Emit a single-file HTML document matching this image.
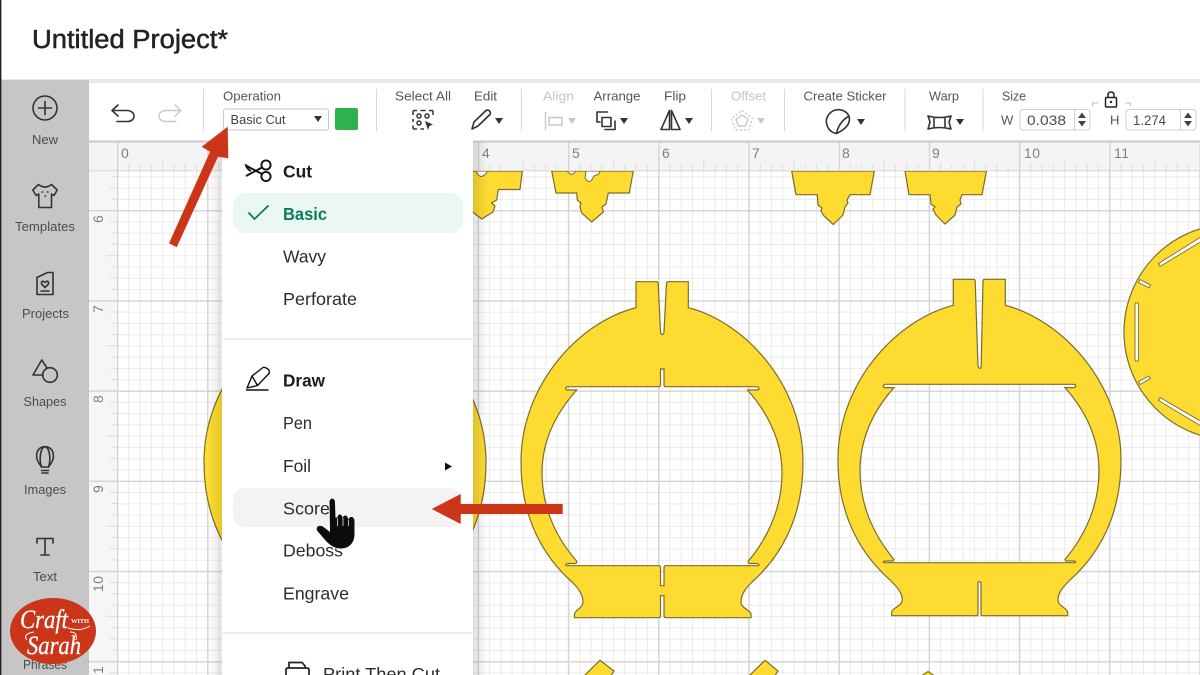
<!DOCTYPE html>
<html><head><meta charset="utf-8"><title>Untitled Project</title>
<style>
html,body{margin:0;padding:0;background:#fff;width:1200px;height:675px;overflow:hidden}
svg{display:block}
text{font-family:"Liberation Sans",sans-serif}
.lb{font-size:13px;fill:#555}
.side{font-size:13px;fill:#4a4d50}
.m{font-size:17.5px;fill:#2a2c2e}
.r{font-size:14px;fill:#808080}
.ic{fill:none;stroke:#333;stroke-width:1.6;stroke-linecap:round;stroke-linejoin:round}
.dis{fill:none;stroke:#c8c8c8;stroke-width:1.4}
.shape{fill:#fedb31;stroke:#7d6c2c;stroke-width:1.2;fill-rule:evenodd}
</style></head><body>
<svg width="1200" height="675" viewBox="0 0 1200 675" xmlns="http://www.w3.org/2000/svg">
<defs>
<pattern id="gmin" patternUnits="userSpaceOnUse" x="117" y="210.2" width="11.275" height="11.275"><path d="M.5 0V11.275M0 .5H11.275" stroke="#ebebeb" stroke-width="1" fill="none"/></pattern>
<pattern id="gmaj" patternUnits="userSpaceOnUse" x="116.8" y="210" width="90.2" height="90.2"><path d="M.8 0V90.2M0 .8H90.2" stroke="#d4d4d4" stroke-width="1.4" fill="none"/></pattern>
<pattern id="tickT" patternUnits="userSpaceOnUse" x="117" y="142" width="90.2" height="29"><path d="M11.8 21V29M22.9 23V29M34.2 23V29M45.6 17V29M56.8 23V29M68 21V29M79.3 23V29" stroke="#dcdcdc" stroke-width="1" fill="none"/><path d="M.7 0V29" stroke="#d2d2d2" stroke-width="1.3"/></pattern>
<pattern id="tickL" patternUnits="userSpaceOnUse" x="89" y="210" width="29" height="90.2"><path d="M21 11.8H29M23 22.9H29M23 34.2H29M17 45.6H29M23 56.8H29M21 68H29M23 79.3H29" stroke="#dcdcdc" stroke-width="1" fill="none"/><path d="M0 .7H29" stroke="#d2d2d2" stroke-width="1.3"/></pattern>
<linearGradient id="sr" x1="0" x2="1" y1="0" y2="0"><stop offset="0" stop-color="#000" stop-opacity=".12"/><stop offset="1" stop-color="#000" stop-opacity="0"/></linearGradient>
<linearGradient id="sl" x1="1" x2="0" y1="0" y2="0"><stop offset="0" stop-color="#000" stop-opacity=".1"/><stop offset="1" stop-color="#000" stop-opacity="0"/></linearGradient>
<clipPath id="canvas"><rect x="118" y="171" width="1082" height="504"/></clipPath>
<path id="pcA" d="M636,281.7H656.5Q658,281.7 658.2,283.5L660.5,332Q661,334.5 662.3,334.5Q663.6,334.5 664,332L666.5,283.5Q666.7,281.7 668.2,281.7H688.3V307.7C745,322 803,385 803,462C803,520 779,558 752,582C746,588 741,594 741,602C741,608 750,610 751,614V617.7H666Q664,617.7 664,615.5V595.7H660.5V615.5Q660.5,617.7 658.5,617.7H574.5V614C575,610 583,608 583,602C583,594 578,588 572,582C545,558 521,520 521,462C521,385 579,322 636,307.7Z M660.5,369H664V384.7Q664,386.7 666,386.7H756.5Q759,387 759,388.5Q759,390 757,390H747.5C767,412 782,440 782,473C782,510 766,540 748,561.5L749,563.5H757Q759,564 759,565Q759,565.7 757,565.7H666Q664,565.7 664,567.7V585.7H660.5V567.7Q660.5,565.7 658.5,565.7H567.5Q565.7,565.7 565.7,565Q565.7,564 567.5,563.5H576L577,561.5C558,540 542,510 542,473C542,440 557,412 576.7,390H567.5Q565.7,390 565.7,388.5Q565.7,387 567.5,386.7H658.5Q660.5,386.7 660.5,384.7Z"/>
</defs>

<!-- page -->
<rect width="1200" height="675" fill="#fff"/>
<rect x="0" y="79" width="1200" height="4" fill="#e9e9e9"/>
<text x="32" y="48" font-size="25.5" fill="#1f2327" stroke="#1f2327" stroke-width=".5" textLength="196" lengthAdjust="spacingAndGlyphs">Untitled Project*</text>

<!-- canvas -->
<rect x="89" y="141" width="1111" height="534" fill="#fff"/>
<rect x="118" y="171" width="1082" height="504" fill="url(#gmin)"/>
<rect x="118" y="171" width="1082" height="504" fill="url(#gmaj)"/>
<rect x="89" y="142" width="1111" height="29" fill="#f4f4f4"/>
<rect x="89" y="171" width="29" height="504" fill="#f6f6f6"/>
<rect x="118" y="142" width="1082" height="29" fill="url(#tickT)"/>
<rect x="89" y="171" width="29" height="504" fill="url(#tickL)"/>
<rect x="89" y="170.3" width="1111" height="1" fill="#d6d6d6"/>
<rect x="117" y="142" width="1" height="533" fill="#d2d2d2"/>
<rect x="89" y="140.5" width="1111" height="2" fill="#c9c9c9"/>
<g class="r">
<text x="121" y="158">0</text><text x="482" y="158">4</text><text x="572" y="158">5</text><text x="662" y="158">6</text><text x="752" y="158">7</text><text x="842" y="158">8</text><text x="932" y="158">9</text><text x="1024" y="158" textLength="16">10</text><text x="1114" y="158" textLength="15">11</text>
<text transform="translate(103,223) rotate(-90)">6</text><text transform="translate(103,313) rotate(-90)">7</text><text transform="translate(103,403) rotate(-90)">8</text><text transform="translate(103,493) rotate(-90)">9</text><text transform="translate(103,592) rotate(-90)" textLength="16">10</text><text transform="translate(103,674) rotate(-90)">1</text>
</g>

<!-- yellow pieces -->
<g clip-path="url(#canvas)">
<use href="#pcA" class="shape"/>
<use href="#pcA" class="shape" transform="translate(-317,0)"/>
<path class="shape" d="M953.3,279.3H973.5Q975,279.3 975.2,281L978,366Q978.5,368.3 979.7,368.3Q980.9,368.3 981.2,366L983,281Q983.2,279.3 984.7,279.3H1005.3V305.3C1062,320 1121,383 1121,460C1121,518 1097,556 1070,580C1064,586 1058,592 1058,600C1058,606 1067,608 1067.7,612V615.7H982Q981,615.7 981,614V582.5Q981,581.7 979.5,581.7Q978,581.7 978,582.5V614Q978,615.7 976.5,615.7H891.7V612C892,608 902.3,606 902.3,600C902.3,592 896,586 890,580C863,556 838,518 838,460C838,383 896,320 953.3,305.3Z M885,384.3H1074Q1075.7,384.6 1075.7,386Q1075.7,387.4 1074,387.6H1065C1085,410 1099,438 1099,471C1099,508 1083,538 1065,559.5L1066,561H1074Q1075.7,561.4 1075.7,562Q1075.7,562.7 1074,562.7H885Q883.3,562.7 883.3,562Q883.3,561.4 885,561H893L894,559.5C876,538 860,508 860,471C860,438 874,410 894,387.6H885Q883.3,387.4 883.3,386Q883.3,384.6 885,384.3Z"/>
<circle cx="1232" cy="332" r="108" class="shape"/>
<g fill="#fff" stroke="#7d6c2c" stroke-width=".9">
<rect x="1135" y="303" width="3.6" height="58" rx="1"/>
<path d="M1138.5,282.500L1140,279.500L1150.500,285L1149,287.800Z"/>
<path d="M1138.5,381.500L1149,376L1150.500,378.500L1140,384.500Z"/>
<path d="M1160,397.500L1202,422L1200,425.500L1158.500,400.500Z"/>
<path d="M1160,266.500L1202,241L1200,237.500L1158.500,263.500Z"/>
</g>
<path class="shape" d="M460,171H522.3L520,189.5H498.3L496.7,200L491.5,203L495,206L493,212L481.7,219L470,210Z"/>
<path fill="#fff" stroke="#7d6c2c" d="M476,171Q479,178 483,176Q487,174 487,171Z"/>
<path class="shape" d="M551.7,171L556,193H576.7L577.3,200L581,203L580,207L581.7,213L591.7,222L603.3,212L602,207L606,204L608.3,193H629.3L633.3,171Z"/>
<path fill="#fff" stroke="#7d6c2c" d="M567,171Q570,175 573,174Q575,173 575,171Z M586,171L585,178Q588,183 591,181L594,176L599,174L600,171Z"/>
<path class="shape" d="M791.7,171L796,194.7H817.3L818,205L822,208L821,211L824,216L833.3,224.5L843,215L845,207L848,203L847,200L850,194.7H870L874.3,171Z"/>
<path class="shape" d="M905,171L909,194.7H930L931,204L935,207L933,209L936,215L945,224L955,215L957,207L961,204L960,200L962,194.7H982L986.4,171Z"/>
<path class="shape" d="M583,677L600,660.3L614,671L610,677Z"/>
<path class="shape" d="M748,677L765,660.3L778,671L774,677Z"/>
<path class="shape" d="M920,677L928,671.5L936,677Z"/>
</g>

<!-- sidebar -->
<rect x="1" y="80" width="88" height="595" fill="#c6c6c6"/>
<rect x="0" y="0" width="1.4" height="675" fill="#222"/>
<g class="ic">
<circle cx="45" cy="108" r="12"/><path d="M45 101.5V114.5M38.5 108H51.5"/>
<path d="M38.5 184.5L32.8 190L36.2 195.5L38.8 194V207.5H51.5V194L54 195.5L57.2 190L51.5 184.5Q45 189.5 38.5 184.5Z"/>
<path d="M42 192H42.6M47.4 192H48M45 196H45.6" stroke-width="1.5"/>
<path d="M37 277.5L47.5 272.5H53V294.5H37Z"/>
<path d="M45 287.5L41.5 284Q41 281 43.3 281.2L45 282.5L46.7 281.2Q49 281 48.5 284Z"/><path d="M41 291H49"/>
<path d="M41.7 360L33 375H43M41.7 360L47 368"/><circle cx="50" cy="375" r="7.3"/>
<path d="M38.8 463C35 458 35.5 447 45 446.7C54.5 447 55 458 51.2 463L48.5 467H41.5Z"/><path d="M41.5 467C38.5 458 41 447 45 446.7C49 447 51.5 458 48.5 467"/><path d="M41.5 470.5H48.5M42 473H48"/>
<path d="M37 543V538.5H53V543M45 538.5V555M41 555H49"/>
</g>
<g class="side">
<text x="32" y="144" textLength="26">New</text>
<text x="15" y="231" textLength="60" lengthAdjust="spacingAndGlyphs">Templates</text>
<text x="22" y="318" textLength="47" lengthAdjust="spacingAndGlyphs">Projects</text>
<text x="23.5" y="406" textLength="43" lengthAdjust="spacingAndGlyphs">Shapes</text>
<text x="24" y="494" textLength="42" lengthAdjust="spacingAndGlyphs">Images</text>
<text x="33" y="581" textLength="24" lengthAdjust="spacingAndGlyphs">Text</text>
<text x="23" y="669" textLength="44" lengthAdjust="spacingAndGlyphs">Phrases</text>
</g>
<ellipse cx="53" cy="631" rx="43" ry="33" fill="#cb3518"/>
<text x="20" y="628" font-size="26" font-style="italic" fill="#fff" stroke="#fff" stroke-width=".3" style="font-family:'Liberation Serif',serif" textLength="48" lengthAdjust="spacingAndGlyphs">Craft</text>
<text x="71" y="623" font-size="6.5" font-weight="bold" fill="#fff" style="font-family:'Liberation Serif',serif" textLength="18">WITH</text>
<text x="27" y="654" font-size="26" font-style="italic" fill="#fff" stroke="#fff" stroke-width=".3" style="font-family:'Liberation Serif',serif" textLength="54" lengthAdjust="spacingAndGlyphs">Sarah</text>
<path d="M68 628Q80 632 90 626M27 640Q22 634 34 632M70 632Q78 632 76 640" fill="none" stroke="#fff" stroke-width="1"/>

<!-- toolbar -->
<path class="ic" stroke-width="1.7" d="M118 105L112 110.5L118 116M112 110.5H127C131 110.5 134 113 134 116C134 119.5 131 121.5 127 121.5H117"/>
<path class="dis" stroke-linecap="round" stroke-linejoin="round" d="M175 105L181 110.5L175 116M181 110.5H166C162 110.5 159 113 159 116C159 119.5 162 121.5 166 121.5H176"/>
<g fill="#d8d8d8"><rect x="203" y="89" width="1" height="42"/><rect x="376" y="89" width="1" height="42"/><rect x="521" y="89" width="1" height="42"/><rect x="711" y="89" width="1" height="42"/><rect x="784" y="89" width="1" height="42"/><rect x="904.5" y="89" width="1" height="42"/><rect x="982.5" y="89" width="1" height="42"/></g>
<text class="lb" x="223" y="100.5" textLength="58" lengthAdjust="spacingAndGlyphs">Operation</text>
<rect x="223.5" y="109" width="105" height="21" rx="2" fill="#fff" stroke="#c9c9c9"/>
<text x="230.5" y="124" font-size="13" fill="#444" textLength="55" lengthAdjust="spacingAndGlyphs">Basic Cut</text>
<path d="M314 116H322L318 122Z" fill="#333"/>
<rect x="335" y="108" width="23" height="22" rx="2" fill="#2db24c"/>
<text class="lb" x="395" y="100.5" textLength="56" lengthAdjust="spacingAndGlyphs">Select All</text>
<g fill="none" stroke="#333" stroke-width="1.5">
<path d="M413 115V112Q413 110.5 414.5 110.5H417M420.5 110.5H425.5M429 110.5H431.5Q433 110.5 433 112V115M413 119V122M413 125.5V127.5Q413 129 414.5 129H417M420.5 129H424"/>
<circle cx="419" cy="116" r="2"/><circle cx="427" cy="116" r="2"/><circle cx="419" cy="123" r="2"/></g>
<path d="M425 121L433 124.5L429.5 126L428 130Z" fill="#333"/>
<text class="lb" x="474" y="100.5" textLength="23" lengthAdjust="spacingAndGlyphs">Edit</text>
<path class="ic" stroke-width="1.4" d="M472 129L474 122L486 110.5Q488 109.5 489.5 111Q491 112.5 490 114.5L478 126Z"/>
<path d="M495 118H503L499 124Z" fill="#333"/>
<text x="543" y="100.5" font-size="13" fill="#c6c6c6" textLength="31" lengthAdjust="spacingAndGlyphs">Align</text>
<path class="dis" d="M545.5 112V130M549 117.5H562V125H549Z"/>
<path d="M568 118H576L572 124Z" fill="#c8c8c8"/>
<text class="lb" x="593.5" y="100.5" textLength="47" lengthAdjust="spacingAndGlyphs">Arrange</text>
<path class="ic" stroke-width="1.5" d="M597 115V112H607.5M597 115V122H600M602 117.5H611V126.5H602ZM615 121V129.5H605"/>
<path d="M620 118H628L624 124Z" fill="#333"/>
<text class="lb" x="664" y="100.5" textLength="22" lengthAdjust="spacingAndGlyphs">Flip</text>
<path class="ic" stroke-width="1.5" d="M669.5 110.5V129.5H661ZM671.5 110.5V129.5H680Z"/>
<path d="M685 118H693L689 124Z" fill="#333"/>
<text x="731" y="100.5" font-size="13" fill="#c6c6c6" textLength="35" lengthAdjust="spacingAndGlyphs">Offset</text>
<path class="dis" d="M742 115L748 119.5L745.5 126H738.5L736 119.5Z"/>
<path class="dis" stroke-dasharray="2 2" d="M742 110.5L752.5 118.5L748.5 130H735.5L731.500 118.5Z"/>
<path d="M757 118H765L761 124Z" fill="#c8c8c8"/>
<text class="lb" x="803.5" y="100.5" textLength="83" lengthAdjust="spacingAndGlyphs">Create Sticker</text>
<path class="ic" stroke-width="1.6" d="M849 116A12 12 0 1 0 836.5 133.5C838 126 842 120 849 116ZM849 116C851 123 846 129 836.5 133.500"/>
<path d="M857 119H865L861 125Z" fill="#333"/>
<text class="lb" x="929" y="100.5" textLength="30" lengthAdjust="spacingAndGlyphs">Warp</text>
<path class="ic" stroke-width="1.5" d="M928 116Q939 119 951 116L949 122L951 129Q939 126 928 129L930 122Z M934 117.5V127.5M945 117.5V127.5"/>
<path d="M956 119H964L960 125Z" fill="#333"/>
<text class="lb" x="1002" y="100.5" textLength="24" lengthAdjust="spacingAndGlyphs">Size</text>
<text class="lb" x="1001" y="124.500" textLength="12">W</text>
<rect x="1020" y="109.5" width="70" height="20.5" rx="3" fill="#fff" stroke="#cfcfcf"/>
<text x="1027" y="125" font-size="14" fill="#4c4c4c" textLength="39" lengthAdjust="spacingAndGlyphs">0.038</text>
<path d="M1074.5 109.5V130" stroke="#cfcfcf"/>
<path d="M1078 118L1082 112.5L1086 118ZM1078 121L1082 126.5L1086 121Z" fill="#444"/>
<text class="lb" x="1110" y="124.500" textLength="9">H</text>
<rect x="1126" y="109.5" width="70" height="20.5" rx="3" fill="#fff" stroke="#cfcfcf"/>
<text x="1133" y="125" font-size="14" fill="#4c4c4c" textLength="33" lengthAdjust="spacingAndGlyphs">1.274</text>
<path d="M1180.5 109.5V130" stroke="#cfcfcf"/>
<path d="M1184 118L1188 112.5L1192 118ZM1184 121L1188 126.5L1192 121Z" fill="#444"/>
<path d="M1092.5 106V103H1098M1125 103H1130.5V106" fill="none" stroke="#bbb" stroke-width="1"/>
<rect x="1105.5" y="97.5" width="11" height="9.5" rx="1" fill="none" stroke="#222" stroke-width="1.5"/>
<path d="M1108 97.5V95Q1108 92 1111 92Q1114 92 1114 95V97.5" fill="none" stroke="#222" stroke-width="1.5"/>
<circle cx="1111" cy="102" r="1.2" fill="#222"/>

<!-- menu shadows -->
<rect x="473" y="142" width="15" height="533" fill="url(#sr)"/>
<rect x="208" y="142" width="14" height="533" fill="url(#sl)"/>
<!-- menu -->
<rect x="222" y="131" width="251" height="544" fill="#fff"/>
<rect x="233" y="193" width="230" height="40" rx="12" fill="#ebf7f2"/>
<rect x="233" y="488" width="229" height="39" rx="11" fill="#f3f3f3"/>
<rect x="223" y="338.5" width="250" height="1.2" fill="#e3e3e3"/>
<rect x="223" y="632.5" width="250" height="1.2" fill="#e3e3e3"/>
<g fill="none" stroke="#111" stroke-width="1.9">
<circle cx="266" cy="165" r="4.6"/><circle cx="266" cy="176.5" r="4.6"/>
<path d="M262 167.5L246 176M262 174L246 165.5Q247 169 251 171"/></g>
<path d="M249 213L254.5 219L268 206" fill="none" stroke="#0b7c5c" stroke-width="1.8" stroke-linecap="round"/>
<text class="m" x="283" y="177.5" font-weight="bold" style="fill:#1a1c1e" textLength="29" lengthAdjust="spacingAndGlyphs">Cut</text>
<text class="m" x="283" y="219.8" font-weight="bold" style="fill:#0b7c5c" textLength="44" lengthAdjust="spacingAndGlyphs">Basic</text>
<text class="m" x="283" y="262.5" textLength="43" lengthAdjust="spacingAndGlyphs">Wavy</text>
<text class="m" x="283" y="305" textLength="74" lengthAdjust="spacingAndGlyphs">Perforate</text>
<path d="M247 388L252 376L263 367.5Q266 367 269 370Q270 372.5 268.5 374L257.5 385.5ZM252 376L257.5 385.5M246.5 390H268" fill="none" stroke="#111" stroke-width="1.4" stroke-linejoin="round" stroke-linecap="round"/>
<text class="m" x="283" y="386.5" font-weight="bold" style="fill:#1a1c1e" textLength="42" lengthAdjust="spacingAndGlyphs">Draw</text>
<text class="m" x="283" y="429" textLength="29" lengthAdjust="spacingAndGlyphs">Pen</text>
<text class="m" x="283" y="471.8" textLength="28" lengthAdjust="spacingAndGlyphs">Foil</text>
<path d="M445 462.5L452 466.5L445 470.5Z" fill="#111"/>
<text class="m" x="283" y="514.3" textLength="47" lengthAdjust="spacingAndGlyphs">Score</text>
<text class="m" x="283" y="556.7" textLength="60" lengthAdjust="spacingAndGlyphs">Deboss</text>
<text class="m" x="283" y="599.3" textLength="66" lengthAdjust="spacingAndGlyphs">Engrave</text>
<path d="M289 668V662.5H302L305 666V668M286 680V670Q286 668 288 668H307Q309 668 309 670V680" fill="none" stroke="#222" stroke-width="1.7"/>
<text class="m" x="323" y="680" textLength="117" lengthAdjust="spacingAndGlyphs">Print Then Cut</text>

<!-- arrows -->
<path d="M169 243.3L210 151.7L201.7 146.7L227.7 126.7L228.3 158.3L218 156.7L176.7 247.3Z" fill="#cc3517"/>
<path d="M431.7 509L460.7 494V504H562.7V514H460.7V524Z" fill="#cc3517"/>
<!-- hand cursor -->
<path d="M329.5 502C329.5 497.5 335 497.5 335 502L335.5 517.5L337.5 517.5C337.5 513.5 342.5 513.5 342.5 518L343 518C343 514.5 348 514.5 348 519L348.5 519.5C349 516 354.500 516 354.500 521L354.500 534C354.500 543 349 548.500 341 548.500C334 548.500 330 545 326 541L317 530.500C315.500 526 320 524.500 323.500 527L330 532Z" fill="#0c0c0c" stroke="#fff" stroke-width="1.5" paint-order="stroke"/>
<path d="M337.5 518V526M343 518V526M348.5 520V526" stroke="#fff" stroke-width=".7"/>
</svg>
</body></html>
